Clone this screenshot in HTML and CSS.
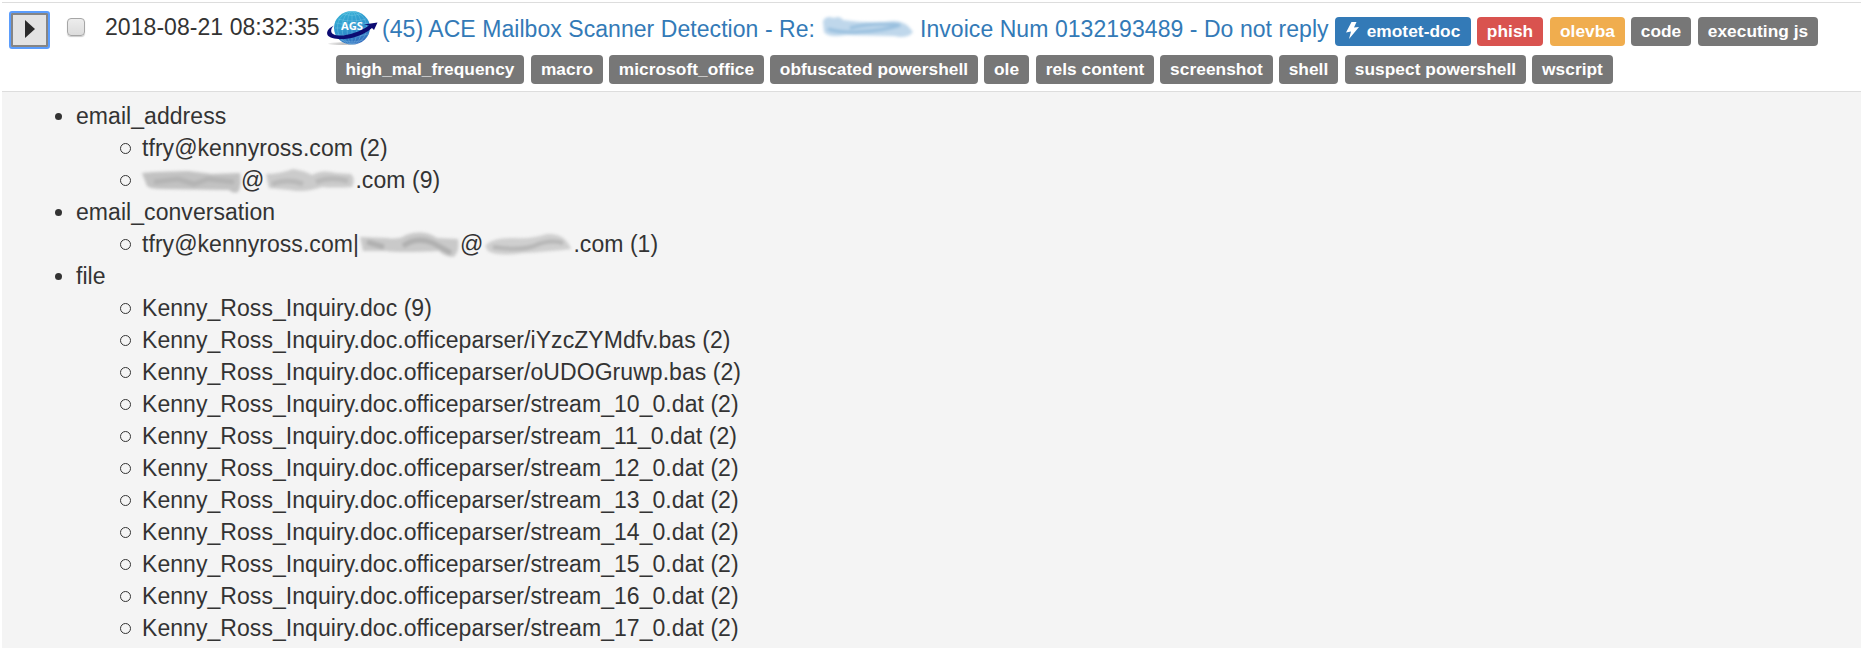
FILE: index.html
```html
<!DOCTYPE html>
<html lang="en">
<head>
<meta charset="utf-8">
<title>Alerts</title>
<link rel="stylesheet" href="styles.css">
</head>
<body>
<main class="alerts">
  <section class="alert-row">
    <button class="expand" aria-label="Expand"><svg width="10" height="18" viewBox="0 0 10 18"><path d="M0 0L10 9L0 18Z" fill="#2b2b2b"/></svg></button>
    <span class="check" role="checkbox" aria-checked="false"></span>
    <time class="date">2018-08-21 08:32:35</time>
    <div class="summary">
      <div class="line first">
        <svg class="logo" width="53" height="36" viewBox="0 0 53 36">
          <defs>
            <linearGradient id="globe" x1="0.3" y1="0" x2="0.7" y2="1"><stop offset="0" stop-color="#35b0d4"/><stop offset="0.5" stop-color="#2e94cd"/><stop offset="1" stop-color="#3467bd"/></linearGradient>
            <linearGradient id="shade"><stop offset="0" stop-color="#eee"/><stop offset="0.5" stop-color="#c4c4c4"/><stop offset="1" stop-color="#ddd"/></linearGradient>
          </defs>
          <ellipse cx="17" cy="33.7" rx="15" ry="1.4" fill="url(#shade)"/>
          <ellipse cx="26" cy="17.8" rx="18" ry="16.8" fill="url(#globe)"/>
          <g fill="none" stroke="#9edcf0" stroke-width="0.5" opacity="0.55">
            <path d="M26 1V34M9 18H43M12 9Q26 13 40 9M17 4Q26 7 35 4M10 13Q26 17 42 13M10 24Q26 29 42 24M15 30Q26 34 37 30"/>
            <ellipse cx="26" cy="17.8" rx="5" ry="16.5"/><ellipse cx="26" cy="17.8" rx="10" ry="16.5"/><ellipse cx="26" cy="17.8" rx="14.5" ry="16.5"/>
          </g>
          <path d="M8 15.500C3 18 0 21 1.500 25C6 31.500 31 31 46 18L48 20L51.500 12.500L38 14.500L43 15.500C31 24 14 28 7 24C4 22 5 18 8 15.500Z" fill="#0c0b72"/>
          <text x="26" y="20" text-anchor="middle" class="logo-text" textLength="22" lengthAdjust="spacingAndGlyphs">AGS</text>
        </svg>
        <a class="title"><span class="t1">(45) ACE Mailbox Scanner Detection - Re:</span>
        <svg class="smear-blue" width="92" height="28" viewBox="0 0 92 28"><g class="soft"><path d="M1 7Q4 1 12 4Q18 1 21 6Q50 10 72 7Q84 7 91 18Q86 25 72 22L24 21Q6 24 2 18Z" fill="#bfd7eb"/><path d="M28 14Q52 8 78 11Q62 17 34 18M6 15Q18 19 38 18" fill="none" stroke="#98bfde" stroke-width="3"/></g></svg>
        <span class="t2">Invoice Num 0132193489 - Do not reply</span></a>
        <span class="tag blue w-emotet"><svg width="13" height="17" viewBox="0 0 13 17"><path d="M5.5 0L10.5 0L8 5.5L13 5L3 17L5 9.5L0 10.5Z" fill="#fff"/></svg>emotet-doc</span>
        <span class="tag red w-phish">phish</span>
        <span class="tag orange w-olevba">olevba</span>
        <span class="tag w-code">code</span>
        <span class="tag w-exec">executing js</span>
      </div>
      <div class="line second">
        <span class="tag w-high">high_mal_frequency</span>
        <span class="tag w-macro">macro</span>
        <span class="tag w-office">microsoft_office</span>
        <span class="tag w-obf">obfuscated powershell</span>
        <span class="tag w-ole">ole</span>
        <span class="tag w-rels">rels content</span>
        <span class="tag w-screen">screenshot</span>
        <span class="tag w-shell">shell</span>
        <span class="tag w-suspect">suspect powershell</span>
        <span class="tag w-wscript">wscript</span>
      </div>
    </div>
  </section>
  <section class="details">
    <ul class="groups">
      <li><div class="name">email_address</div>
        <ul class="items">
          <li>tfry@kennyross.com (2)</li>
          <li><svg class="smear" width="99" height="32" viewBox="0 0 99 32"><g class="soft"><path d="M0 9L12 8L46 7L70 10L98 9Q100 22 96 28Q91 30 87 26L20 25Q8 25 5 22Z" fill="#c2c2c2"/><path d="M12 18L36 15L52 20L66 15L92 18" fill="none" stroke="#b4b4b4" stroke-width="5"/></g></svg>@<svg class="smear" width="91" height="32" viewBox="0 0 91 32"><g class="soft"><path d="M2 10Q16 10 29 5Q42 7 48 11Q58 5 72 9L87 10Q92 15 88 23Q70 24 58 23Q40 29 26 26L5 24Z" fill="#cbcbcb"/><path d="M8 20Q24 14 39 20M52 18Q66 12 84 17" fill="none" stroke="#b9b9b9" stroke-width="5"/></g></svg>.com (9)</li>
        </ul></li>
      <li><div class="name">email_conversation</div>
        <ul class="items">
          <li>tfry@kennyross.com|<svg class="smear" width="101" height="32" viewBox="0 0 101 32"><g class="soft"><path d="M1 9L28 10Q40 12 47 7Q64 1 78 10L99 11Q101 25 94 29Q84 28 80 23Q40 25 27 23L4 23Z" fill="#c9c9c9"/><path d="M8 14L25 19M44 18Q58 8 74 15L92 25" fill="none" stroke="#b0b0b0" stroke-width="5"/></g></svg>@<svg class="smear d" width="90" height="32" viewBox="0 0 90 32"><g class="soft"><path d="M2 18Q9 9 32 10Q50 11 64 6Q82 5 88 21Q60 24 40 25Q15 29 5 23Z" fill="#cfcfcf"/><path d="M10 19Q36 23 51 18Q66 11 80 15" fill="none" stroke="#b6b6b6" stroke-width="4"/></g></svg>.com (1)</li>
        </ul></li>
      <li><div class="name">file</div>
        <ul class="items">
          <li>Kenny_Ross_Inquiry.doc (9)</li>
          <li>Kenny_Ross_Inquiry.doc.officeparser/iYzcZYMdfv.bas (2)</li>
          <li>Kenny_Ross_Inquiry.doc.officeparser/oUDOGruwp.bas (2)</li>
          <li>Kenny_Ross_Inquiry.doc.officeparser/stream_10_0.dat (2)</li>
          <li>Kenny_Ross_Inquiry.doc.officeparser/stream_11_0.dat (2)</li>
          <li>Kenny_Ross_Inquiry.doc.officeparser/stream_12_0.dat (2)</li>
          <li>Kenny_Ross_Inquiry.doc.officeparser/stream_13_0.dat (2)</li>
          <li>Kenny_Ross_Inquiry.doc.officeparser/stream_14_0.dat (2)</li>
          <li>Kenny_Ross_Inquiry.doc.officeparser/stream_15_0.dat (2)</li>
          <li>Kenny_Ross_Inquiry.doc.officeparser/stream_16_0.dat (2)</li>
          <li>Kenny_Ross_Inquiry.doc.officeparser/stream_17_0.dat (2)</li>
        </ul></li>
    </ul>
  </section>
</main>
</body>
</html>
```
FILE: styles.css
```css
* { box-sizing: border-box; }
body { margin: 0; background: #fff; color: #333; font: 23px/32px "Liberation Sans", Arial, sans-serif; letter-spacing: 0.055px; font-variant-ligatures: none; overflow: hidden; }
.alerts { margin: 2px 0 0 2px; height: 646px; display: flex; flex-direction: column; overflow: hidden; }
.alert-row { height: 89px; flex: none; border-top: 1px solid #ddd; display: flex; align-items: flex-start; white-space: nowrap; }
.expand { width: 39px; height: 36px; margin: 9px 0 0 8px; padding: 0 0 3px; border: 1px solid #767676; border-radius: 2px; outline: 2px solid #5b9dfd; outline-offset: -1px; box-shadow: inset 0 0 0 2px #858585; background: #e3e3e3; display: flex; align-items: center; justify-content: center; }
.check { width: 18px; height: 18px; margin: 15px 0 0 18px; border: 1px solid #a6a6a6; border-radius: 4px; background: linear-gradient(#ededed, #dcdcdc); box-shadow: 0 1px 1px #ccc; }
.date { width: 221px; margin: 8px 0 0 20px; }
.summary { display: flex; flex-direction: column; }
.line { display: flex; align-items: flex-start; }
.first { height: 52px; }
.logo { flex: none; margin-top: 7px; }
.logo-text { font: bold 11px "Open Sans", sans-serif; fill: #fff; letter-spacing: 0; }
.title { display: flex; color: #337ab7; margin-top: 10px; }
.t1 { width: 436px; margin-left: 3px; }
.t2 { width: 415px; margin-left: 6px; }
.smear-blue { margin: 1px 0 0 4px; flex: none; overflow: visible; }
.soft { filter: blur(1.5px); }
.tag { height: 29px; margin-right: 6px; border-radius: 4px; background: #777; color: #fff; font-weight: bold; font-size: 17.3px; line-height: 29px; display: flex; align-items: center; justify-content: center; flex: none; }
.tag svg { margin: -2px 8px 0 0; flex: none; }
.first .tag { margin-top: 14px; }
.second { padding-left: 10px; }
.blue { background: #337ab7; }
.red { background: #d9534f; }
.orange { background: #f0ad4e; }
.w-emotet { width: 136px; }
.w-phish { width: 66px; margin-right: 7px; }
.w-olevba { width: 75px; }
.w-code { width: 60px; margin-right: 7px; }
.w-exec { width: 120px; }
.w-high { width: 188px; margin-right: 7px; }
.w-macro { width: 72px; }
.w-office { width: 155px; }
.w-obf { width: 208px; }
.w-ole { width: 45px; margin-right: 7px; }
.w-rels { width: 118px; }
.w-screen { width: 113px; }
.w-shell { width: 59px; margin-right: 7px; }
.w-suspect { width: 181px; }
.w-wscript { width: 81px; }
.details { flex: 1; min-height: 0; overflow: hidden; background: #f4f4f4; border-top: 1px solid #ddd; padding-top: 8px; }
.groups, .items { list-style: none; margin: 0; padding: 0; }
.groups { padding-left: 53px; }
.name, .items li { display: flex; align-items: center; height: 32px; white-space: nowrap; }
.name::before { content: ""; width: 7px; height: 7px; margin-right: 14px; border-radius: 50%; background: #333; flex: none; }
.items { padding-left: 65px; }
.items li::before { content: ""; width: 9px; height: 9px; margin-right: 11px; border: 1px solid #333; border-radius: 50%; flex: none; }
.smear { flex: none; overflow: visible; }
```
